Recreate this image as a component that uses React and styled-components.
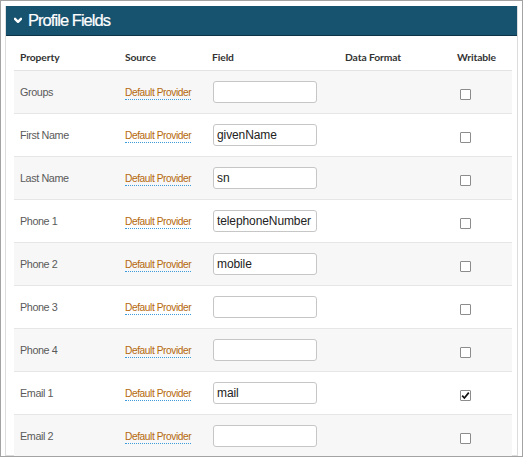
import React from "react";
import styled, { createGlobalStyle } from "styled-components";

const Global = createGlobalStyle`
  html, body { margin: 0; padding: 0; background: #fff; }
  body { font-family: "Liberation Sans", Arial, sans-serif; }
  * { box-sizing: border-box; }
`;

const Frame = styled.div`
  width: 523px;
  height: 457px;
  border: 1px solid #a3a3a3;
  padding: 5px 4px 0 4px;
  overflow: hidden;
  background: #fff;
`;

const Panel = styled.section`
  border: 1px solid #dcdcdc;
  border-top: none;
  height: 100%;
`;

const PanelHeader = styled.header`
  height: 30px;
  background: #17536f;
  border-bottom: 1px solid #0c3347;
  display: flex;
  align-items: center;
  padding-left: 8px;
  gap: 6px;
  color: #fff;
`;

const Title = styled.h2`
  margin: 0;
  font-family: "Liberation Sans", Arial, sans-serif;
  font-weight: normal;
  font-size: 16.5px;
  letter-spacing: -0.95px;
  color: #fff;
  -webkit-text-stroke: 0.2px #fff;
`;

const Body = styled.div`
  padding: 0 5px 0 8px;
`;

const cols = "105px 87px 133px 112px 1fr";

const HeadRow = styled.div`
  display: grid;
  grid-template-columns: ${cols};
  height: 35px;
  border-bottom: 1px solid #e3e3e3;
  align-items: end;
  padding-bottom: 7px;
`;

const HeadCell = styled.div`
  padding-left: 6px;
  font-family: Lato, "Liberation Sans", sans-serif;
  font-weight: bold;
  font-size: 10.3px;
  color: #333;
  letter-spacing: -0.1px;
`;

const Row = styled.div`
  display: grid;
  grid-template-columns: ${cols};
  height: 43px;
  border-bottom: 1px solid #e6e6e6;
  align-items: center;
  background: ${(p) => (p.$shade ? "#f7f7f7" : "#fff")};
`;

const Cell = styled.div`
  padding-left: 6px;
  display: flex;
  align-items: center;
`;

const Label = styled.span`
  font-size: 10.8px;
  color: #5a5a5a;
  letter-spacing: -0.4px;
`;

const ProviderLink = styled.a`
  font-size: 10.2px;
  color: #b5680c;
  letter-spacing: -0.42px;
  text-decoration: none;
  border-bottom: 1px dotted #3c9bd8;
  padding-bottom: 1px;
  margin-top: 3px;
  cursor: pointer;
`;

const FieldInput = styled.input`
  width: 104px;
  height: 22px;
  margin-left: 1px;
  margin-top: -1px;
  border: 1px solid #c6c6c6;
  border-radius: 3px;
  padding: 0 3px;
  font-family: "Liberation Sans", Arial, sans-serif;
  font-size: 12px;
  letter-spacing: -0.1px;
  color: #222;
  background: #fff;
  outline: none;
`;

const Check = styled.span`
  display: inline-flex;
  align-items: center;
  justify-content: center;
  width: 11px;
  height: 11px;
  margin-left: 3px;
  margin-top: 5px;
  border: 1px solid #8c8c8c;
  border-radius: 1px;
  background: #fff;
`;

const Chevron = () => (
  <svg width="8" height="7" viewBox="0 0 8 7">
    <polyline points="1,1.8 4,4.8 7,1.8" fill="none" stroke="#fff" strokeWidth="2.4" strokeLinecap="round" strokeLinejoin="round" />
  </svg>
);

const rows = [
  { name: "Groups", field: "" },
  { name: "First Name", field: "givenName" },
  { name: "Last Name", field: "sn" },
  { name: "Phone 1", field: "telephoneNumber" },
  { name: "Phone 2", field: "mobile" },
  { name: "Phone 3", field: "" },
  { name: "Phone 4", field: "" },
  { name: "Email 1", field: "mail", writable: true },
  { name: "Email 2", field: "" },
];

export default function App() {
  return (
    <>
      <Global />
      <Frame>
        <Panel>
          <PanelHeader>
            <Chevron />
            <Title>Profile Fields</Title>
          </PanelHeader>
          <Body>
            <HeadRow>
              <HeadCell>Property</HeadCell>
              <HeadCell>Source</HeadCell>
              <HeadCell>Field</HeadCell>
              <HeadCell>Data Format</HeadCell>
              <HeadCell>Writable</HeadCell>
            </HeadRow>
            {rows.map((r, i) => (
              <Row key={r.name} $shade={i % 2 === 0}>
                <Cell><Label>{r.name}</Label></Cell>
                <Cell><ProviderLink>Default Provider</ProviderLink></Cell>
                <Cell><FieldInput readOnly value={r.field} /></Cell>
                <Cell />
                <Cell>
                  <Check>
                    {r.writable && (
                      <svg width="9" height="9" viewBox="0 0 9 9">
                        <polyline points="1.2,4.6 3.4,7 7.8,1.6" fill="none" stroke="#111" strokeWidth="1.7" />
                      </svg>
                    )}
                  </Check>
                </Cell>
              </Row>
            ))}
          </Body>
        </Panel>
      </Frame>
    </>
  );
}
